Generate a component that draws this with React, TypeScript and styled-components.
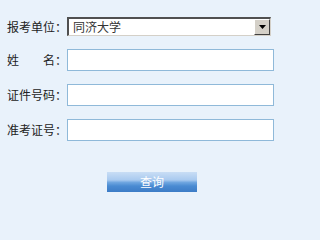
import React from "react";
import styled, { createGlobalStyle } from "styled-components";

const Global = createGlobalStyle`
  html, body { margin: 0; padding: 0; background: #e9f2fb; }
  body { font-family: "Noto Sans CJK SC", "Noto Sans", sans-serif; }
`;

const Page = styled.div`
  width: 296px;
  height: 203px;
  background: #e9f2fb;
  box-sizing: border-box;
  padding: 17px 0 0 7px;
  display: flex;
  flex-direction: column;
`;

const Form = styled.div`
  display: flex;
  flex-direction: column;
  gap: 13px;
`;

const Row = styled.div<{ $h: number }>`
  display: flex;
  align-items: center;
  height: ${(p) => p.$h}px;
`;

const Label = styled.span`
  width: 60px;
  font-size: 12px;
  line-height: 12px;
  color: #222;
  white-space: pre;
  letter-spacing: 0;
`;

const SelectBox = styled.div`
  box-sizing: border-box;
  width: 204px;
  height: 19px;
  background: #fff;
  border-top: 2px solid #505050;
  border-left: 2px solid #505050;
  border-right: 1px solid #d4d0c8;
  border-bottom: 1px solid #d4d0c8;
  display: flex;
  align-items: center;
  justify-content: space-between;
  padding-left: 4px;
`;

const SelectText = styled.span`
  font-size: 12px;
  line-height: 14px;
  color: #333;
`;

const DropButton = styled.div`
  box-sizing: border-box;
  width: 16px;
  height: 16px;
  background: #d4d0c8;
  border-top: 1px solid #ffffff;
  border-left: 1px solid #ffffff;
  border-right: 1px solid #404040;
  border-bottom: 1px solid #404040;
  display: flex;
  align-items: center;
  justify-content: center;
`;

const Input = styled.div`
  box-sizing: border-box;
  width: 207px;
  height: 22px;
  background: #fff;
  border: 1px solid #8fb9d9;
`;

const ButtonRow = styled.div`
  display: flex;
  padding: 31px 0 0 100px;
`;

const QueryButton = styled.div`
  width: 90px;
  height: 20px;
  display: flex;
  align-items: center;
  justify-content: center;
  color: #fff;
  font-size: 12px;
  line-height: 12px;
  background: linear-gradient(
    to bottom,
    #c9def5 0%,
    #a9caef 40%,
    #6fa6e0 52%,
    #4a8bd2 70%,
    #3c7cc6 100%
  );
`;

export default function App() {
  return (
    <>
      <Global />
      <Page>
        <Form>
          <Row $h={19}>
            <Label>报考单位：</Label>
            <SelectBox>
              <SelectText>同济大学</SelectText>
              <DropButton>
                <svg width="7" height="4" viewBox="0 0 7 4">
                  <polygon points="0,0 7,0 3.5,4" fill="#000" />
                </svg>
              </DropButton>
            </SelectBox>
          </Row>
          <Row $h={22}>
            <Label>{"姓　　名："}</Label>
            <Input />
          </Row>
          <Row $h={22}>
            <Label>证件号码：</Label>
            <Input />
          </Row>
          <Row $h={22}>
            <Label>准考证号：</Label>
            <Input />
          </Row>
        </Form>
        <ButtonRow>
          <QueryButton>查询</QueryButton>
        </ButtonRow>
      </Page>
    </>
  );
}
